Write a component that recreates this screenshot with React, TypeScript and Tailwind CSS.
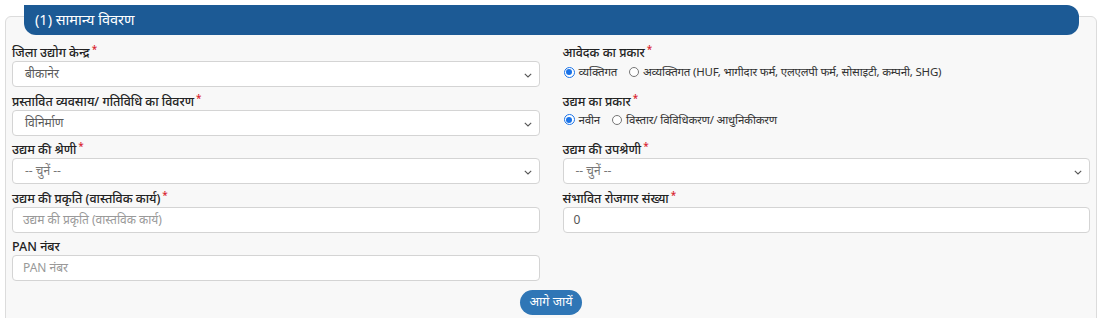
import React from 'react';

const font = { fontFamily: '"Noto Sans", "Noto Sans Devanagari", sans-serif' };

function Label({ text, required = true }: { text: string; required?: boolean }) {
  return (
    <div className="h-[17px] flex items-end text-[12.5px] leading-[17px] font-medium text-[#222]">
      <span>{text}</span>
      {required && <span className="text-[#d9232e] text-[10px] ml-[2px] self-start leading-[11px]">*</span>}
    </div>
  );
}

function Chevron() {
  return (
    <svg width="8" height="5" viewBox="0 0 8 5" className="absolute right-[7px] top-[11px]">
      <path d="M0.8 0.8 L4 4 L7.2 0.8" fill="none" stroke="#555" strokeWidth="1.1" />
    </svg>
  );
}

function SelectBox({ value, placeholder = false }: { value: string; placeholder?: boolean }) {
  return (
    <div className="relative h-[26px] bg-white border border-[#d4d4d4] rounded-[4px] flex items-center pl-[12px]">
      <span className={`text-[12px] ${placeholder ? 'text-[#777]' : 'text-[#5a5a5a]'}`}>{value}</span>
      <Chevron />
    </div>
  );
}

function TextBox({ value, placeholder = false }: { value: string; placeholder?: boolean }) {
  return (
    <div className="h-[26px] bg-white border border-[#d4d4d4] rounded-[4px] flex items-center pl-[10px]">
      <span className={`text-[12px] ${placeholder ? 'text-[#999]' : 'text-[#555]'}`}>{value}</span>
    </div>
  );
}

function Radio({ checked, text }: { checked: boolean; text: string }) {
  return (
    <span className="flex items-center gap-[4px] mr-[12px]">
      {checked ? (
        <span className="w-[11px] h-[11px] rounded-full border-[1.5px] border-[#1a73e8] flex items-center justify-center bg-white">
          <span className="w-[6px] h-[6px] rounded-full bg-[#1a73e8]" />
        </span>
      ) : (
        <span className="w-[10px] h-[10px] rounded-full border border-[#767676] bg-white" />
      )}
      <span className="text-[11.5px] tracking-[-0.2px] text-[#333]">{text}</span>
    </span>
  );
}

export default function App() {
  return (
    <div className="w-[1100px] h-[318px] overflow-hidden bg-white" style={font}>
      <div className="pt-[16px] pl-[5px] pr-[3px]">
        <div className="border border-[#dcdcdc] rounded-[6px] bg-[#f8f8f8] px-[6px] pb-[20px]">
          {/* Header bar */}
          <div className="-mt-[12px] ml-[12px] mr-[11px] h-[30px] bg-[#1c5a95] rounded-[0_12px_12px_12px] flex items-center pl-[11px]">
            <span className="text-white text-[14.5px]">(1) सामान्य विवरण</span>
          </div>

          <div className="mt-[9px] grid grid-cols-2 gap-x-[23px] gap-y-[5.5px]">
            <div>
              <Label text="जिला उद्योग केन्द्र" />
              <SelectBox value="बीकानेर" />
            </div>
            <div>
              <Label text="आवेदक का प्रकार" />
              <div className="h-[22px] flex items-center pl-[1px]">
                <Radio checked text="व्यक्तिगत" />
                <Radio checked={false} text="अव्यक्तिगत (HUF, भागीदार फर्म, एलएलपी फर्म, सोसाइटी, कम्पनी, SHG)" />
              </div>
            </div>

            <div>
              <Label text="प्रस्तावित व्यवसाय/ गतिविधि का विवरण" />
              <SelectBox value="विनिर्माण" />
            </div>
            <div>
              <Label text="उद्यम का प्रकार" />
              <div className="h-[20px] flex items-center pl-[1px]">
                <Radio checked text="नवीन" />
                <Radio checked={false} text="विस्तार/ विविधिकरण/ आधुनिकीकरण" />
              </div>
            </div>

            <div>
              <Label text="उद्यम की श्रेणी" />
              <SelectBox value="-- चुनें --" placeholder />
            </div>
            <div>
              <Label text="उद्यम की उपश्रेणी" />
              <SelectBox value="-- चुनें --" placeholder />
            </div>

            <div>
              <Label text="उद्यम की प्रकृति (वास्तविक कार्य)" />
              <TextBox value="उद्यम की प्रकृति (वास्तविक कार्य)" placeholder />
            </div>
            <div>
              <Label text="संभावित रोजगार संख्या" />
              <TextBox value="0" />
            </div>

            <div>
              <Label text="PAN नंबर" required={false} />
              <TextBox value="PAN नंबर" placeholder />
            </div>
            <div />
          </div>

          <div className="mt-[9px] flex justify-center">
            <button className="h-[25px] px-[10px] rounded-full bg-[#2f76b6] text-white text-[12.5px] flex items-center">
              आगे जायें
            </button>
          </div>
        </div>
      </div>
    </div>
  );
}
